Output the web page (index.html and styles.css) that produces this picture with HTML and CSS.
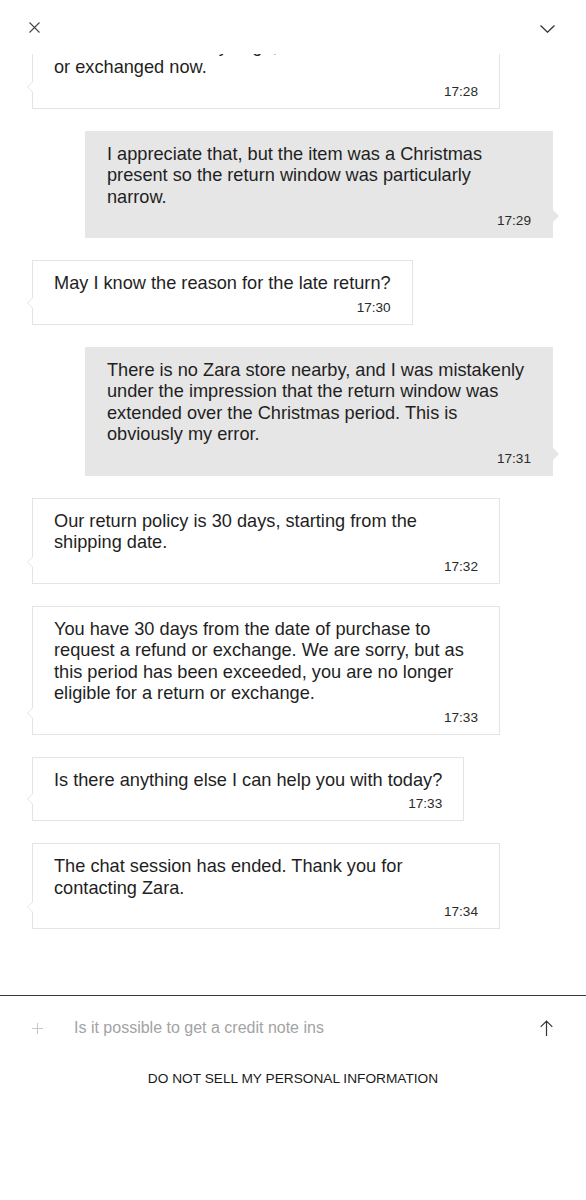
FILE: index.html
```html
<!DOCTYPE html>
<html lang="en">
<head>
    <meta charset="UTF-8">
    <meta name="viewport" content="width=device-width, initial-scale=1.0">
    <title>Chat</title>
    <link rel="stylesheet" href="styles.css">
</head>
<body>
    <div class="chat">
        <div class="header">
            <svg class="icon-close" width="11" height="11" viewBox="0 0 11 11">
                <path d="M0.5 0.5 L10.5 10.5 M10.5 0.5 L0.5 10.5" />
            </svg>
            <svg class="icon-chevron" width="15" height="8" viewBox="0 0 15 8">
                <polyline points="0.5,0.5 7.5,7.2 14.5,0.5" />
            </svg>
        </div>

        <div class="messages">
            <div class="msg agent">
                <p>Unfortunately, your order was<br>delivered over 30 days ago, so it cannot be returned or exchanged now.</p>
                <span class="time">17:28</span>
            </div>
            <div class="msg user">
                <p>I appreciate that, but the item was a Christmas present so the return window was particularly narrow.</p>
                <span class="time">17:29</span>
            </div>
            <div class="msg agent">
                <p>May I know the reason for the late return?</p>
                <span class="time">17:30</span>
            </div>
            <div class="msg user">
                <p>There is no Zara store nearby, and I was mistakenly under the impression that the return window was extended over the Christmas period. This is obviously my error.</p>
                <span class="time">17:31</span>
            </div>
            <div class="msg agent">
                <p>Our return policy is 30 days, starting from the shipping date.</p>
                <span class="time">17:32</span>
            </div>
            <div class="msg agent">
                <p>You have 30 days from the date of purchase to request a refund or exchange. We are sorry, but as this period has been exceeded, you are no longer eligible for a return or exchange.</p>
                <span class="time">17:33</span>
            </div>
            <div class="msg agent">
                <p>Is there anything else I can help you with today?</p>
                <span class="time">17:33</span>
            </div>
            <div class="msg agent">
                <p>The chat session has ended. Thank you for contacting Zara.</p>
                <span class="time">17:34</span>
            </div>
        </div>

        <div class="composer">
            <svg class="icon-plus" width="11" height="11" viewBox="0 0 11 11">
                <path d="M5.5 0 V11 M0 5.5 H11" />
            </svg>
            <input class="composer-input" type="text" value="Is it possible to get a credit note ins">
            <svg class="icon-send" width="13" height="16" viewBox="0 0 13 16">
                <path d="M6.5 1 V16 M0.7 6.8 L6.5 1 L12.3 6.8" />
            </svg>
        </div>

        <div class="footer">
            <a class="footer-link" href="#">DO NOT SELL MY PERSONAL INFORMATION</a>
        </div>
    </div>
</body>
</html>
```

FILE: styles.css
```css
body {
    margin: 0;
    padding: 0;
    background-color: #fff;
    color: #1f1f1f;
    font-family: "Liberation Sans", Arial, sans-serif;
}

.chat {
    display: flex;
    flex-direction: column;
    height: 1200px;
}

/* Top bar */
.header {
    height: 54px;
    box-sizing: border-box;
    padding: 22px 31px 0 29px;
    display: flex;
    justify-content: space-between;
    align-items: flex-start;
}

.icon-close path {
    stroke: #444;
    stroke-width: 1.1;
    fill: none;
}

.icon-chevron {
    margin-top: 3px;
}

.icon-chevron polyline {
    stroke: #333;
    stroke-width: 1.3;
    fill: none;
}

/* Message list, scrolled to the bottom */
.messages {
    height: 941px;
    box-sizing: border-box;
    overflow: hidden;
    display: flex;
    flex-direction: column;
    justify-content: flex-end;
    gap: 22px;
    padding: 0 33px 66px 32px;
}

.msg {
    position: relative;
    flex-shrink: 0;
    max-width: 468px;
    box-sizing: border-box;
    padding: 12px 21px 8px;
    border: 1px solid #e4e4e4;
    font-size: 18.2px;
}

.msg p {
    margin: 0;
    line-height: 21.5px;
}

.msg .time {
    display: block;
    margin-top: 4px;
    text-align: right;
    font-size: 13.6px;
    line-height: 17px;
    color: #2a2a2a;
}

.agent {
    align-self: flex-start;
    background-color: #fff;
}

.user {
    align-self: flex-end;
    background-color: #e6e6e6;
    border-color: #e6e6e6;
}

/* Bubble tails */
.msg::before,
.msg::after {
    content: "";
    position: absolute;
    width: 0;
    height: 0;
    border-top: 6px solid transparent;
    border-bottom: 6px solid transparent;
}

.agent::before {
    left: -6px;
    bottom: 15px;
    border-right: 6px solid #e4e4e4;
}

.agent::after {
    left: -5px;
    bottom: 15px;
    border-right: 6px solid #fff;
}

.user::before {
    right: -7px;
    bottom: 15px;
    border-left: 6px solid #e6e6e6;
}

.user::after {
    display: none;
}

/* Input row */
.composer {
    border-top: 1px solid #3a3a3a;
    height: 64px;
    display: flex;
    align-items: center;
    padding: 0 33px 0 32px;
}

.icon-plus {
    flex-shrink: 0;
    margin-right: 31px;
}

.icon-plus path {
    stroke: #c8c8c8;
    stroke-width: 1;
    fill: none;
}

.composer-input {
    flex: 1;
    min-width: 0;
    border: none;
    outline: none;
    padding: 0;
    background: transparent;
    font-family: inherit;
    font-size: 16px;
    color: #a3a3a3;
}

.icon-send {
    flex-shrink: 0;
}

.icon-send path {
    stroke: #333;
    stroke-width: 1.2;
    fill: none;
}

.footer {
    text-align: center;
    padding-top: 9px;
}

.footer-link {
    font-size: 13.7px;
    color: #1a1a1a;
    text-decoration: none;
}
```
